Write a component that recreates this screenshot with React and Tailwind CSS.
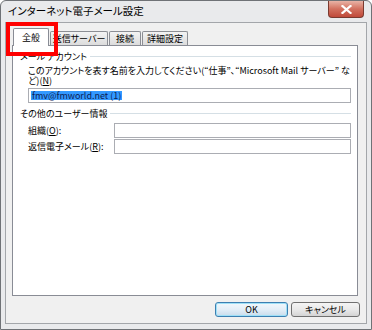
import React from "react";

const font = { fontFamily: '"Noto Sans CJK JP", "Noto Sans", sans-serif' };

function Tab({ label, active, w }) {
  if (active) {
    return (
      <div
        className={`relative z-10 -mb-px h-[18px] ${w} flex items-center justify-center border border-b-0 border-[#898c95] bg-white text-[9px] leading-none text-black rounded-t-[2px]`}
      >
        {label}
      </div>
    );
  }
  return (
    <div
      className={`h-[14px] ${w} flex items-center justify-center border border-b-0 border-[#8c8e94] bg-gradient-to-b from-[#f3f3f3] to-[#dcdcdc] text-[9px] leading-none text-black rounded-t-[2px]`}
    >
      {label}
    </div>
  );
}

function GroupHeader({ label }) {
  return (
    <div className="flex items-center h-[12px] pl-[7px] pr-[6px]">
      <span className="text-[9px] leading-none whitespace-nowrap text-black">{label}</span>
      <div className="flex-1 ml-[3px] h-px bg-[#d5dfe5]" />
    </div>
  );
}

function Field({ label, mnemonic, className }) {
  return (
    <div className={`flex items-center pl-[15px] pr-[6px] ${className}`}>
      <span className="w-[86px] text-[9px] leading-none whitespace-nowrap text-black">
        {label}(<span className="underline">{mnemonic}</span>):
      </span>
      <div className="flex-1 h-[15px] border border-[#abadb3] bg-white" />
    </div>
  );
}

export default function App() {
  return (
    <div
      className="relative w-[372px] h-[330px] bg-[#e9eaec] border border-[#6f7276] rounded-t-[6px] overflow-hidden [font-feature-settings:'palt']"
      style={font}
    >
      {/* title bar */}
      <div className="h-[21px] flex items-center pl-[7px]">
        <span className="text-[10.5px] leading-none text-black whitespace-nowrap">
          インターネット電子メール設定
        </span>
      </div>
      <div className="absolute top-0 right-[7px] w-[36px] h-[17px] rounded-b-[4px] border border-t-0 border-[#7a3a30] bg-gradient-to-b from-[#e8b3a6] via-[#d2705f] to-[#c0493a] flex items-center justify-center">
        <svg width="11" height="9" viewBox="0 0 11 9">
          <path d="M1.5 1 L9.5 8 M9.5 1 L1.5 8" stroke="#fff" strokeWidth="2.2" strokeLinecap="square" />
        </svg>
      </div>

      {/* client area */}
      <div className="mx-[4px] h-[302px] border border-[#a3a6aa] bg-[#f0f0f0] flex flex-col">
        <div className="flex items-end h-[22px] pl-[7px] gap-[1px]">
          <Tab label="全般" active w="w-[36px]" />
          <Tab label="送信サーバー" w="w-[58px]" />
          <Tab label="接続" w="w-[32px]" />
          <Tab label="詳細設定" w="w-[46px]" />
        </div>

        <div className="ml-[6px] mr-[8px] h-[251px] border border-[#898c95] bg-white flex flex-col">
          <div className="mt-[4px]">
            <GroupHeader label="メール アカウント" />
          </div>
          <p className="mt-[4px] pl-[15px] text-[9px] leading-[10px] text-black whitespace-nowrap">
            このアカウントを表す名前を入力してください(“仕事”、“Microsoft Mail サーバー” な
            <br />
            ど)(<u>N</u>)
          </p>
          <div className="mt-[2px] pl-[15px] pr-[6px]">
            <div className="h-[15px] border border-[#abadb3] bg-white flex items-center pl-[2px]">
              <span className="h-[9px] flex items-center bg-[#3399ff] text-[#0b1d55] text-[9px] leading-none px-px whitespace-nowrap">
                fmv@fmworld.net (1)
              </span>
            </div>
          </div>
          <div className="mt-[4px]">
            <GroupHeader label="その他のユーザー情報" />
          </div>
          <Field label="組織" mnemonic="O" className="mt-[4px]" />
          <Field label="返信電子メール" mnemonic="R" className="mt-[1px]" />
        </div>

        <div className="flex justify-end gap-[3px] pr-[6px] mt-[6px]">
          <button className="w-[73px] h-[15px] rounded-[3px] border border-[#3c7fb1] bg-gradient-to-b from-[#f2f8fc] via-[#e3eef7] to-[#c9dcec] shadow-[inset_0_0_0_1px_#9fe0f7] text-[9px] leading-none text-black">
            OK
          </button>
          <button className="w-[69px] h-[15px] rounded-[3px] border border-[#707070] bg-gradient-to-b from-[#f4f4f4] via-[#e9e9e9] to-[#d4d4d4] text-[9px] leading-none text-black">
            キャンセル
          </button>
        </div>
      </div>

      {/* red highlight annotation */}
      <div className="absolute left-[5px] top-[21px] w-[52px] h-[34px] border-[4px] border-[#ff0000]" />
    </div>
  );
}
